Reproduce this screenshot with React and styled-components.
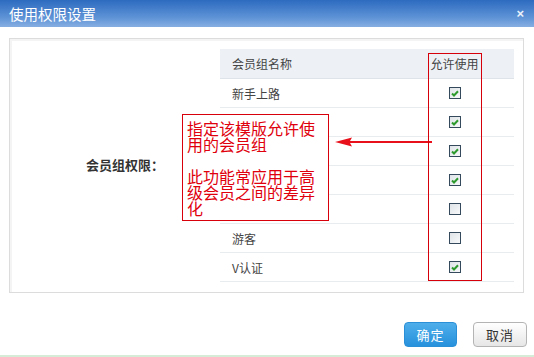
import React from 'react';
import styled, { createGlobalStyle } from 'styled-components';

const GlobalStyle = createGlobalStyle`
    html, body {
        margin: 0;
        padding: 0;
        background: #fff;
    }
    body {
        font-family: "Noto Sans CJK SC", "Liberation Sans", sans-serif;
        color: #333;
    }
`;

const Dialog = styled.div`
    width: 534px;
    height: 357px;
    display: flex;
    flex-direction: column;
    border-bottom: 2px solid #d6ecd6;
    box-sizing: border-box;
`;

const TitleBar = styled.div`
    height: 27px;
    flex: none;
    display: flex;
    align-items: center;
    justify-content: space-between;
    padding: 0 10px 0 9px;
    background: linear-gradient(#2d6bc0, #5e93d6 65%, #86aee2);
    color: #fff;
    font-size: 14.5px;
`;

const Close = styled.span`
    font-family: "Liberation Sans", sans-serif;
    font-size: 13px;
    font-weight: bold;
    color: #eaf2fb;
`;

const Body = styled.div`
    padding: 11px 10px 0 9px;
`;

const Panel = styled.div`
    position: relative;
    height: 255px;
    box-sizing: border-box;
    border: 1px solid #dcdcdc;
    box-shadow: inset 2px 2px 0 #f4f4f4;
    display: grid;
    grid-template-columns: 210px 294px;
    padding-top: 10px;
`;

const Label = styled.div`
    display: flex;
    align-items: center;
    justify-content: flex-end;
    padding-right: 56px;
    padding-bottom: 12px;
    font-size: 13px;
    font-weight: bold;
    color: #333;
`;

const Table = styled.div`
    display: flex;
    flex-direction: column;
    align-self: start;
`;

const Row = styled.div`
    display: grid;
    grid-template-columns: 204px 61px 29px;
    align-items: center;
    height: ${p => (p.$head ? 30 : 29)}px;
    box-sizing: border-box;
    background: ${p => (p.$head ? '#edf1f5' : '#fff')};
    border-bottom: 1px solid ${p => (p.$head ? '#dde3e8' : '#e9ecee')};
    font-size: 12px;
    color: #444;
`;

const Name = styled.div`
    padding-left: 12px;
`;

const Allow = styled.div`
    display: flex;
    justify-content: center;
`;

const Box = styled.span`
    width: 12px;
    height: 12px;
    box-sizing: border-box;
    border: 1px solid #34495b;
    background: linear-gradient(135deg, #dfe4e8, #f7f8f9);
    display: flex;
    align-items: center;
    justify-content: center;
`;

const Note = styled.div`
    position: absolute;
    left: 172px;
    top: 75px;
    width: 147px;
    height: 107px;
    box-sizing: border-box;
    border: 1px solid #d8000a;
    background: #fff;
    padding: 5px 12px 0 4px;
    color: #e0000d;
    font-size: 16px;
    line-height: 16px;
`;

const Para = styled.p`
    margin: 0 0 16px;
`;

const ColumnMark = styled.div`
    position: absolute;
    left: 418px;
    top: 14px;
    width: 54px;
    height: 228px;
    box-sizing: border-box;
    border: 1px solid #d5000a;
    pointer-events: none;
`;

const Arrow = styled.svg`
    position: absolute;
    left: 324px;
    top: 97px;
`;

const Footer = styled.div`
    display: flex;
    justify-content: flex-end;
    gap: 16px;
    padding: 29px 7px 0 0;
`;

const Button = styled.button`
    width: ${p => (p.$primary ? 53 : 54)}px;
    height: 25px;
    border-radius: 4px;
    font-family: inherit;
    font-size: 13px;
    letter-spacing: 1px;
    padding: 0;
    border: 1px solid ${p => (p.$primary ? '#2a8fd6' : '#b4b4b4')};
    color: ${p => (p.$primary ? '#fff' : '#333')};
    background: ${p => (p.$primary
        ? 'linear-gradient(#4eaeea, #2791dc)'
        : 'linear-gradient(#ffffff, #e6e6e6)')};
`;

const groups = [
    { name: '新手上路', on: true },
    { name: '', on: true },
    { name: '', on: true },
    { name: '', on: true },
    { name: '', on: false },
    { name: '游客', on: false },
    { name: 'V认证', on: true },
];

function Check({ on }) {
    return (
        <Box>
            {on && (
                <svg width="8" height="7" viewBox="0 0 8 7">
                    <path d="M1 3.5 L3 5.5 L7 1.2" stroke="#2e9a2e" strokeWidth="2" fill="none" />
                </svg>
            )}
        </Box>
    );
}

export default function App() {
    return (
        <>
            <GlobalStyle />
            <Dialog>
                <TitleBar>
                    <span>使用权限设置</span>
                    <Close>×</Close>
                </TitleBar>
                <Body>
                    <Panel>
                        <Label>会员组权限：</Label>
                        <Table>
                            <Row $head>
                                <Name>会员组名称</Name>
                                <Allow>允许使用</Allow>
                            </Row>
                            {groups.map((g, i) => (
                                <Row key={i}>
                                    <Name>{g.name}</Name>
                                    <Allow><Check on={g.on} /></Allow>
                                </Row>
                            ))}
                        </Table>
                        <Note>
                            <Para>指定该模版允许使用的会员组</Para>
                            <Para>此功能常应用于高级会员之间的差异化</Para>
                        </Note>
                        <Arrow width="100" height="12" viewBox="0 0 100 12">
                            <path d="M1 6 L18 1.5 L16 5 L98 5 L98 7 L16 7 L18 10.5 Z" fill="#e8101a" />
                        </Arrow>
                        <ColumnMark />
                    </Panel>
                </Body>
                <Footer>
                    <Button $primary>确定</Button>
                    <Button>取消</Button>
                </Footer>
            </Dialog>
        </>
    );
}
